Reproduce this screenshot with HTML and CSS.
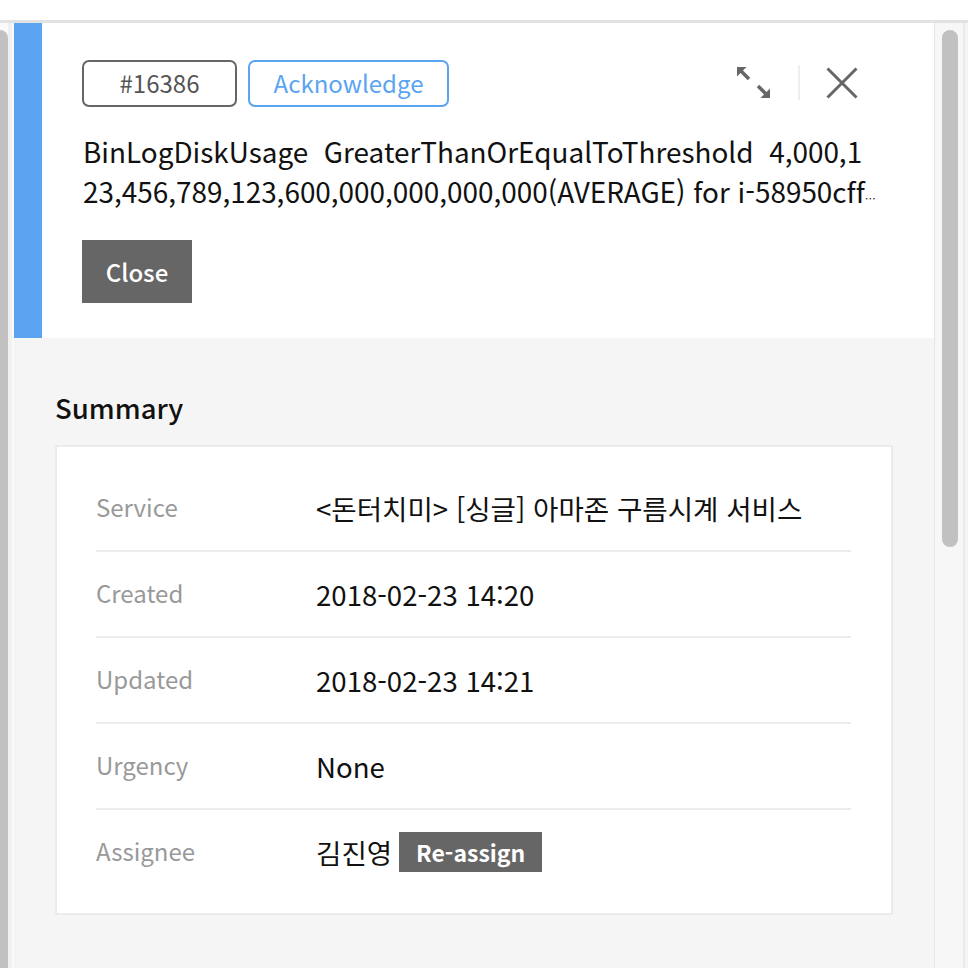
FILE: index.html
```html
<!DOCTYPE html>
<html lang="ko">
<head>
<meta charset="utf-8">
<title>Incident #16386</title>
<link rel="stylesheet" href="styles.css">
</head>
<body>
<div class="topbar"></div>
<div class="main">
  <div class="left-scroll"><div class="thumb"></div><div class="track"></div></div>
  <section class="panel">
    <header class="head">
      <div class="head-top">
        <div class="tags">
          <span class="tag tag-id">#16386</span>
          <span class="tag tag-ack">Acknowledge</span>
        </div>
        <div class="tools">
          <svg class="ico-expand" width="34" height="32" viewBox="0 0 34 32">
            <polygon points="0,0 9.5,0 0,9.5" fill="#666"/>
            <line x1="3" y1="3" x2="12" y2="12" stroke="#666" stroke-width="3.6"/>
            <polygon points="33,31 23.5,31 33,21.5" fill="#666"/>
            <line x1="30" y1="28" x2="21" y2="19" stroke="#666" stroke-width="3.6"/>
          </svg>
          <span class="sep"></span>
          <svg class="ico-close" width="32" height="32" viewBox="0 0 32 32">
            <path d="M1.5 1.5 L30.5 30.5 M30.5 1.5 L1.5 30.5" stroke="#666" stroke-width="3" fill="none"/>
          </svg>
        </div>
      </div>
      <p class="title"><span class="title-text">BinLogDiskUsage  GreaterThanOrEqualToThreshold  4,000,123,456,789,123,600,000,000,000,000(AVERAGE) for i-58950cff4ab1c3 on db-prod-master-01 (ap-northeast-2)</span></p>
      <button class="btn-close">Close</button>
    </header>
    <div class="body">
      <h2 class="sec-title">Summary</h2>
      <div class="card">
        <div class="row"><span class="label">Service</span><span class="value">&lt;돈터치미&gt; [싱글] 아마존 구름시계 서비스</span></div>
        <div class="row"><span class="label">Created</span><span class="value">2018-02-23 14:20</span></div>
        <div class="row"><span class="label">Updated</span><span class="value">2018-02-23 14:21</span></div>
        <div class="row"><span class="label">Urgency</span><span class="value">None</span></div>
        <div class="row"><span class="label">Assignee</span><span class="value">김진영<button class="btn-reassign">Re-assign</button></span></div>
      </div>
    </div>
  </section>
  <div class="right-scroll"><div class="rtrack"><div class="rthumb"></div></div><div class="redge"></div></div>
</div>
</body>
</html>
```
FILE: styles.css
```css
* { box-sizing: border-box; }
html, body { margin: 0; padding: 0; }
body {
  font-family: "Noto Sans CJK KR", "Noto Sans", sans-serif;
  background: #fff;
  color: #111;
  height: 968px;
  overflow: hidden;
}
.topbar {
  height: 23px;
  border-bottom: 3px solid #e2e2e2;
  background: #fff;
}
.main {
  display: flex;
  height: 945px;
}
.left-scroll {
  width: 14px;
  display: flex;
  background: #fafafa;
}
.left-scroll .thumb {
  width: 8px;
  margin-top: 7px;
  background: #c1c1c1;
  border-radius: 0 8px 0 0;
}
.left-scroll .track {
  width: 4px;
  background: #f1f1f1;
}
.panel {
  width: 920px;
  display: flex;
  flex-direction: column;
  background: #f5f5f5;
}
.head {
  background: #fff;
  border-left: 28px solid #5aa4f1;
  padding: 37px 40px 35px 40px;
}
.head-top {
  display: flex;
  justify-content: space-between;
  align-items: flex-start;
}
.tags { display: flex; gap: 11px; }
.tag {
  height: 47px;
  border-radius: 7px;
  font-size: 24px;
  line-height: 42px;
  text-align: center;
}
.tag-id {
  width: 155px;
  border: 2px solid #666;
  color: #555;
}
.tag-ack {
  width: 201px;
  border: 2px solid #5aa4f1;
  color: #5aa4f1;
}
.tools {
  display: flex;
  align-items: center;
  margin-top: 5px;
  margin-right: 36px;
}
.ico-expand { display: block; }
.sep {
  width: 2px;
  height: 35px;
  background: #eee;
  margin: 0 26px 0 27px;
}
.ico-close { display: block; }
.title {
  margin: 24px 0 0 1px;
  font-size: 11px;
  line-height: 0;
  color: #111;
  white-space: pre-wrap;
  word-break: break-all;
  font-variant-ligatures: none;
  display: -webkit-box;
  -webkit-line-clamp: 2;
  -webkit-box-orient: vertical;
  overflow: hidden;
  width: 793px;
  height: 80px;
}
.title-text {
  font-size: 27.9px;
  line-height: 40px;
}
.btn-close {
  margin-top: 29px;
  display: block;
  width: 110px;
  height: 63px;
  border: none;
  background: #666;
  color: #fff;
  font-family: inherit;
  font-size: 24px;
  font-weight: 500;
  padding: 0;
}
.body {
  padding: 50px 41px 0 41px;
}
.sec-title {
  margin: 0 0 19px 0;
  font-size: 27.5px;
  font-weight: 500;
  line-height: 38px;
  color: #111;
}
.card {
  background: #fff;
  border: 2px solid #ebebeb;
  padding: 19px 40px 19px 39px;
}
.row {
  display: flex;
  align-items: center;
  height: 86px;
  border-bottom: 2px solid #ececec;
}
.row:last-child { border-bottom: none; height: 84px; }
.label {
  width: 220px;
  font-size: 24px;
  color: #999;
  margin-top: -3px;
}
.value {
  font-size: 27.6px;
  color: #111;
  display: flex;
  align-items: center;
}
.btn-reassign {
  margin-left: 7px;
  height: 40px;
  width: 143px;
  border: none;
  background: #666;
  color: #fff;
  font-family: inherit;
  font-size: 23px;
  font-weight: 700;
  padding: 0;
}
.right-scroll {
  width: 34px;
  display: flex;
  border-left: 1px solid #e6e6e6;
  background: #f7f7f7;
}
.rtrack {
  width: 28px;
  padding: 7px 4px 0 7px;
}
.rthumb {
  width: 16px;
  height: 517px;
  background: #c1c1c1;
  border-radius: 8px;
}
.redge {
  width: 5px;
  border-left: 2px solid #ebebeb;
  background: #f5f5f5;
}
```
